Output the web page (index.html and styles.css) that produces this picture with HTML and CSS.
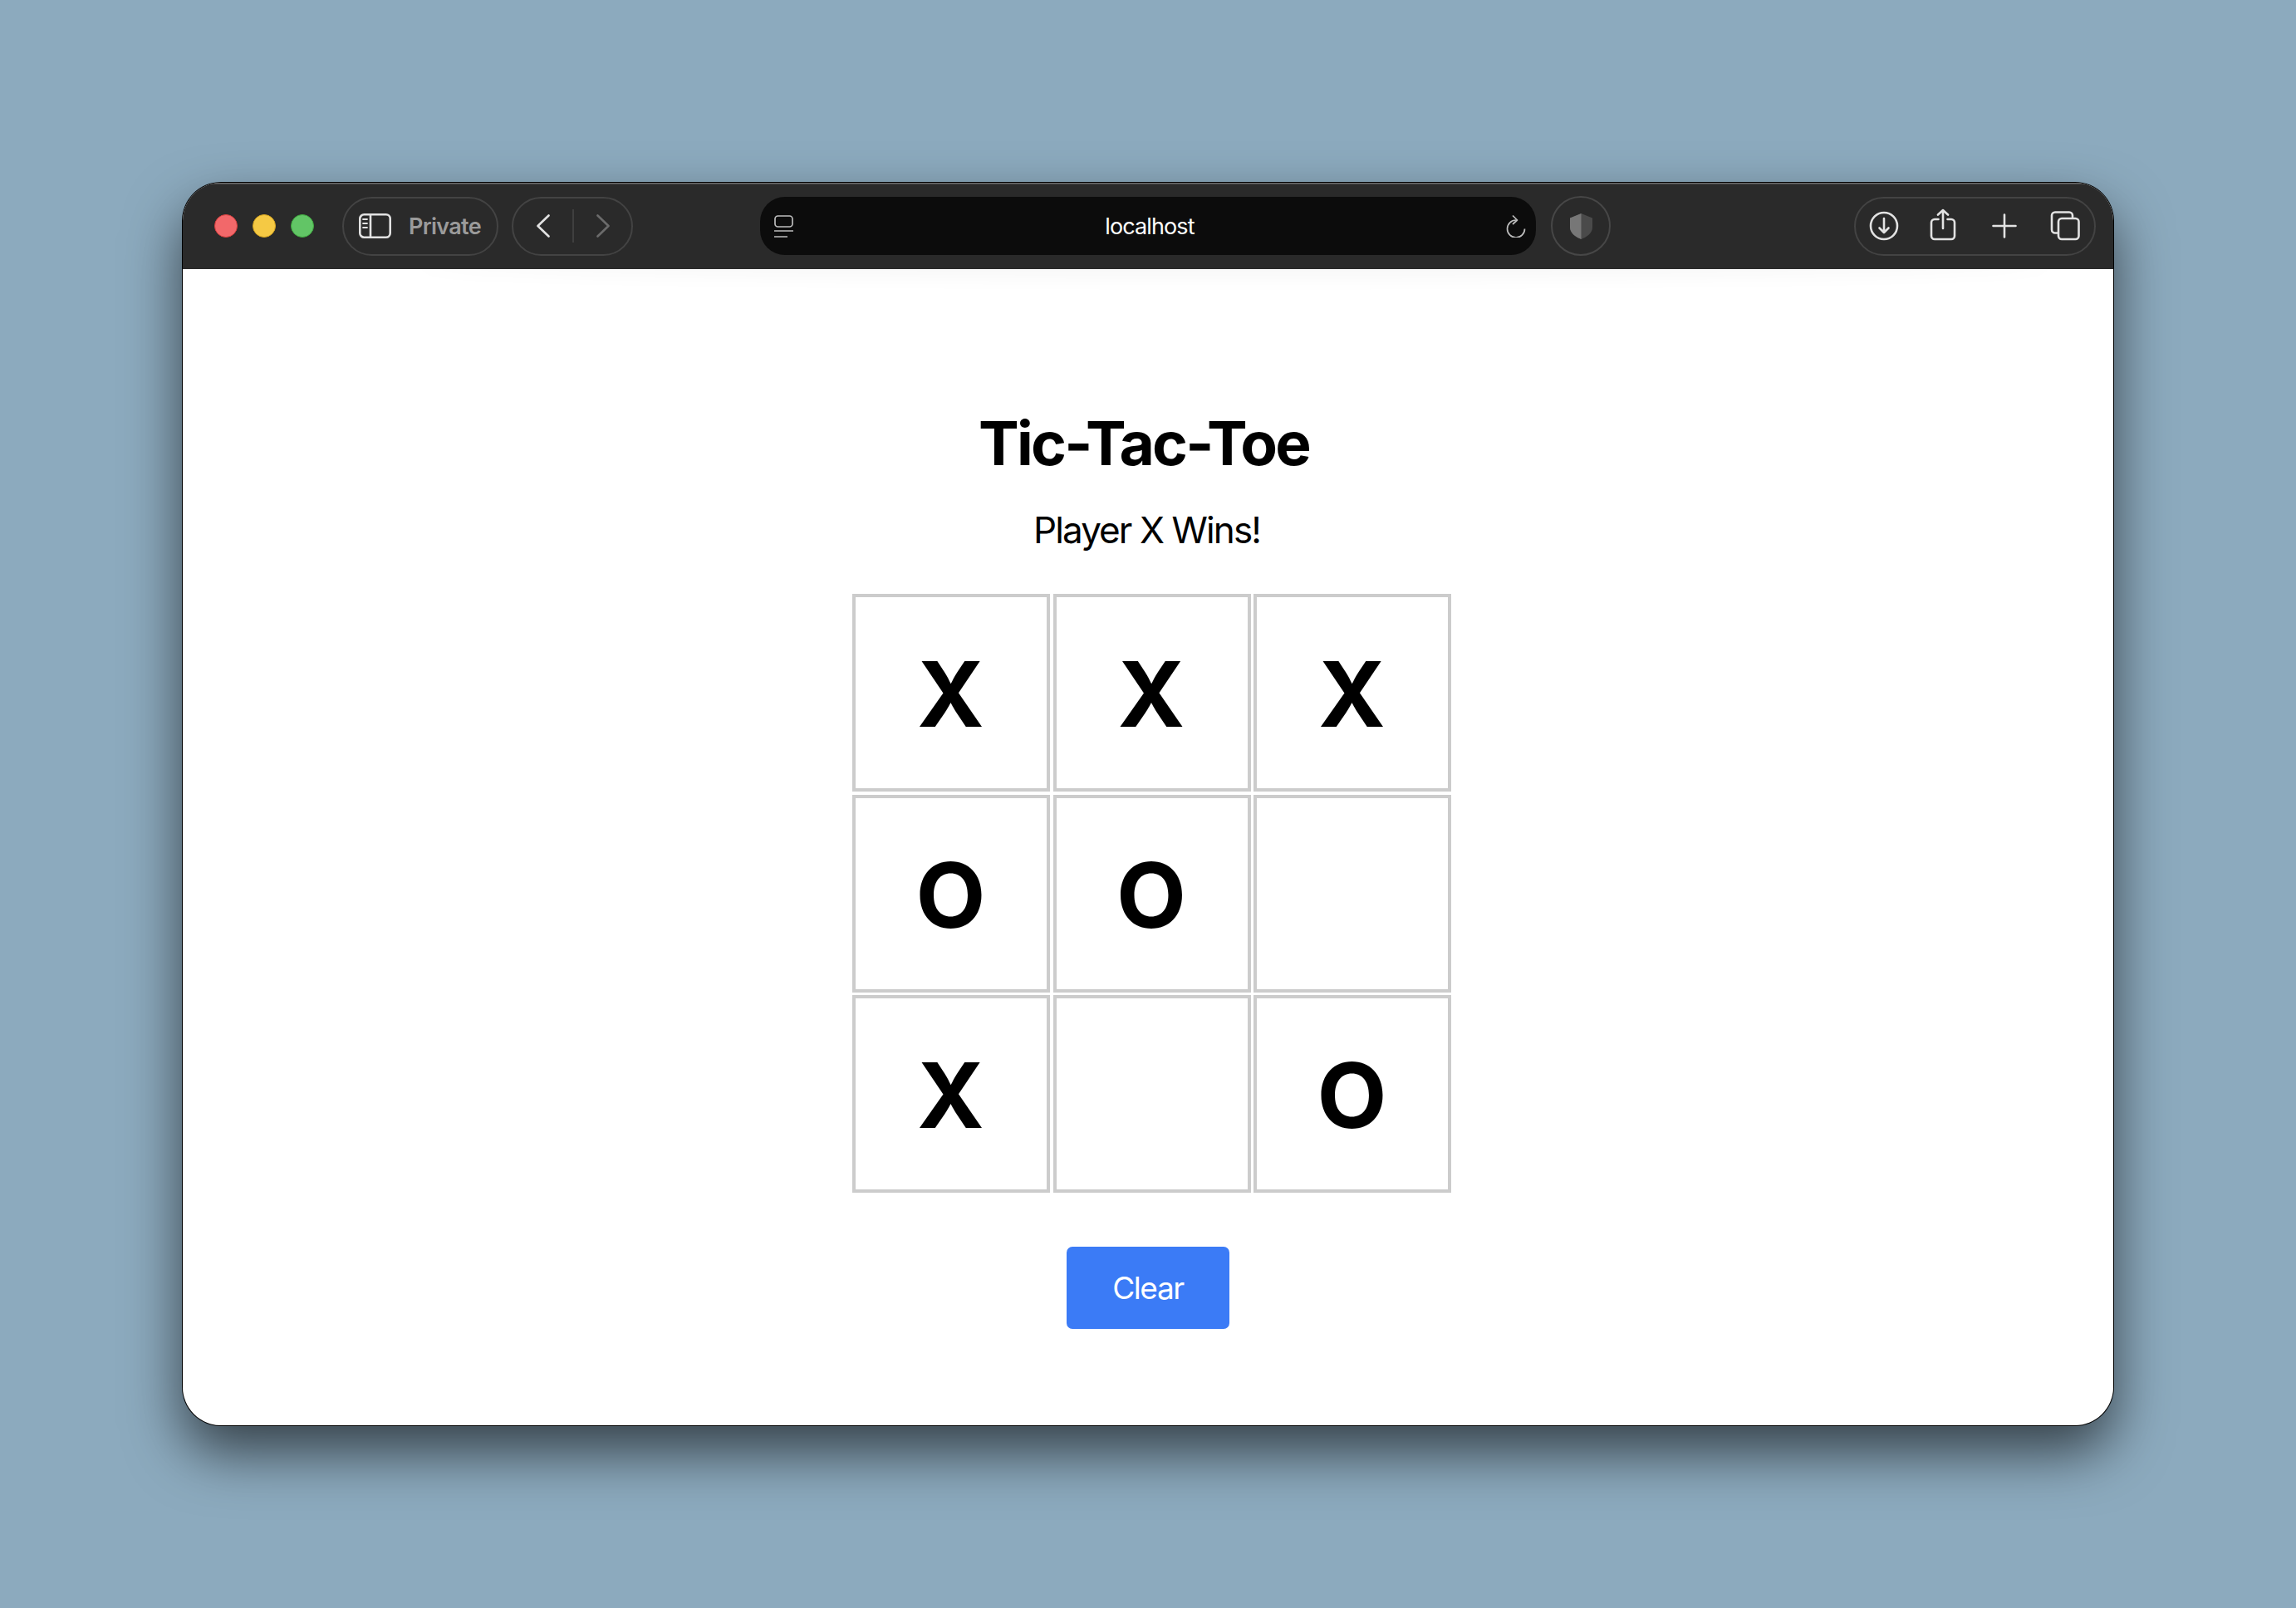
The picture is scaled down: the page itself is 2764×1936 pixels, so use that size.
FILE: index.html
```html
<!DOCTYPE html>
<html lang="en">
<head>
<meta charset="utf-8">
<title>Tic-Tac-Toe</title>
<link rel="stylesheet" href="styles.css">
</head>
<body>
<div class="window">
  <header class="toolbar">
    <div class="lights">
      <span class="light red"></span>
      <span class="light yellow"></span>
      <span class="light green"></span>
    </div>
    <div class="pill private">
      <svg class="ico" width="39" height="30" viewBox="0 0 39 30"><rect x="1.3" y="1.3" width="36.4" height="27.4" rx="5"/><path d="M14 1.3V28.7"/><path class="thin" d="M5 7H10M5 12H10M5 17H10"/></svg>
      <span class="private-label">Private</span>
    </div>
    <div class="pill nav">
      <svg class="ico" width="16" height="28" viewBox="0 0 16 28"><path d="M14.5 1.5L1.5 14L14.5 26.5"/></svg>
      <span class="nav-divider"></span>
      <svg class="ico dim" width="16" height="28" viewBox="0 0 16 28"><path d="M1.5 1.5L14.5 14L1.5 26.5"/></svg>
    </div>
    <div class="urlbar">
      <svg class="ico url-ico" width="23" height="27" viewBox="0 0 23 27"><rect x="1" y="1" width="21" height="13" rx="3.5"/><path d="M0 19H23M0 26H16"/></svg>
      <span class="url-text">localhost</span>
      <svg class="ico url-ico" width="24" height="28" viewBox="0 0 24 28"><path d="M22.5 17.5A10.5 10.5 0 1 1 12 7"/><path d="M8 1.5L13.5 7L8 12"/></svg>
    </div>
    <div class="shield">
      <svg width="29" height="33" viewBox="0 0 29 33"><path class="shield-r" d="M14.5 1L28 6.5V18C28 25 20 30 14.5 32C9 30 1 25 1 18V6.5Z"/><path class="shield-l" d="M14.5 1V32C9 30 1 25 1 18V6.5Z"/></svg>
    </div>
    <div class="pill actions">
      <svg class="ico" width="48" height="48" viewBox="0 0 48 48"><circle cx="24" cy="24" r="16"/><path d="M24 15V32M18.5 26.5L24 32L29.5 26.5"/></svg>
      <svg class="ico" width="48" height="48" viewBox="0 0 48 48"><path d="M16.5 16H12A4 4 0 0 0 8 20V36A4 4 0 0 0 12 40H32A4 4 0 0 0 36 36V20A4 4 0 0 0 32 16H27.5"/><path d="M22 5V27M16 10.5L22 5L28 10.5"/></svg>
      <svg class="ico" width="48" height="48" viewBox="0 0 48 48"><path d="M10.5 24H37.5M24 10.5V37.5"/></svg>
      <svg class="ico" width="48" height="48" viewBox="0 0 48 48"><path d="M33 13.5V11.5A4 4 0 0 0 29 7.500H12A4 4 0 0 0 8 11.5V28.500A4 4 0 0 0 12 32.500H15.500"/><rect x="16" y="15" width="24.500" height="25" rx="4"/></svg>
    </div>
  </header>
  <main class="page">
    <h1 class="title">Tic-Tac-Toe</h1>
    <p class="status">Player X Wins!</p>
    <div class="board">
      <div class="cell">X</div>
      <div class="cell">X</div>
      <div class="cell">X</div>
      <div class="cell">O</div>
      <div class="cell">O</div>
      <div class="cell"></div>
      <div class="cell">X</div>
      <div class="cell"></div>
      <div class="cell">O</div>
    </div>
    <button class="clear" type="button">Clear</button>
  </main>
</div>
</body>
</html>
```
FILE: styles.css
```css
* { box-sizing: border-box; }
html, body { margin: 0; height: 100%; }
body {
  width: 2764px;
  height: 1936px;
  padding: 220px 220px 0;
  overflow: hidden;
  background: #8caabe;
  font-family: Inter, "Liberation Sans", sans-serif;
}
.window {
  width: 2324px;
  height: 1496px;
  display: flex;
  flex-direction: column;
  border-radius: 46px;
  overflow: hidden;
  background: #fff;
  box-shadow: 0 0 0 1px #000, 0 32px 68px rgba(0, 0, 0, .62);
}
.toolbar {
  flex: none;
  height: 104px;
  display: flex;
  align-items: center;
  padding: 0 21px 0 38px;
  background: #2a2a2a;
  box-shadow: inset 0 1.500px 0 #6f6f6f;
  position: relative;
  z-index: 1;
}
.lights { display: flex; gap: 18px; margin-right: 34px; }
.light { width: 28px; height: 28px; border-radius: 50%; border: 1px solid; }
.red { background: #f2686a; border-color: #d9403f; }
.yellow { background: #f5c944; border-color: #d6a520; }
.green { background: #62c566; border-color: #3fa83f; }
.pill {
  height: 71px;
  display: flex;
  align-items: center;
  border: 2px solid #434343;
  border-radius: 36px;
}
.ico { fill: none; stroke: #e2e2e2; stroke-width: 2.6; stroke-linecap: round; stroke-linejoin: round; flex: none; }
.ico .thin { stroke-width: 1.8; }
.ico.dim { stroke: #6b6b6b; }
.private { width: 188px; padding-left: 18px; gap: 21px; margin-right: 16px; }
.private-label { font-size: 27px; font-weight: 600; color: #9b9b9b; letter-spacing: -.7px; }
.nav { width: 146px; padding-left: 28px; gap: 27px; margin-right: 153px; }
.nav-divider { width: 2px; height: 40px; background: #3f3f3f; }
.urlbar {
  width: 934px;
  height: 70px;
  display: flex;
  align-items: center;
  justify-content: space-between;
  padding: 0 12px 0 17px;
  background: #0c0c0c;
  border-radius: 30px;
  margin-right: 18px;
}
.url-ico { stroke: #bdbdbd; stroke-width: 1.7; stroke-linecap: butt; }
.url-text { font-size: 27px; color: #fff; letter-spacing: -.9px; }
.shield {
  width: 72px;
  height: 72px;
  display: flex;
  align-items: center;
  justify-content: center;
  border: 2px solid #474747;
  border-radius: 50%;
}
.shield-r { fill: #4a4a4a; }
.shield-l { fill: #777; }
.actions {
  width: 291px;
  margin-left: auto;
  padding-left: 10px;
  gap: 24.5px;
}
.page {
  flex: 1;
  position: relative;
  display: flex;
  flex-direction: column;
  align-items: center;
  padding-top: 166px;
}
.page::before {
  content: "";
  position: absolute;
  top: -30px;
  left: 12%;
  right: 3%;
  height: 30px;
  border-radius: 50%;
  box-shadow: 0 10px 24px rgba(0, 0, 0, .035);
}
.title {
  margin: 0 10px 0 0;
  font-size: 73px;
  line-height: 88px;
  font-weight: 700;
  color: #000;
  letter-spacing: -2.800px;
}
.status {
  margin: 34px 3px 0 0;
  font-size: 44px;
  line-height: 53px;
  color: #000;
  letter-spacing: -1.900px;
}
.board {
  margin: 50px 0 0 9px;
  display: grid;
  grid-template-columns: repeat(3, 238px);
  grid-auto-rows: 238px;
  gap: 3.500px;
}
.cell {
  display: flex;
  align-items: center;
  justify-content: center;
  border: 4px solid #ccc;
  padding: 2px 1px 0 0;
  font-size: 109px;
  font-weight: 700;
  color: #000;
}
.clear {
  margin-top: 65px;
  width: 196px;
  height: 99px;
  border: 0;
  border-radius: 7px;
  background: #3b7bf6;
  color: #fff;
  font-family: inherit;
  font-size: 37px;
  letter-spacing: -1.400px;
}
```
